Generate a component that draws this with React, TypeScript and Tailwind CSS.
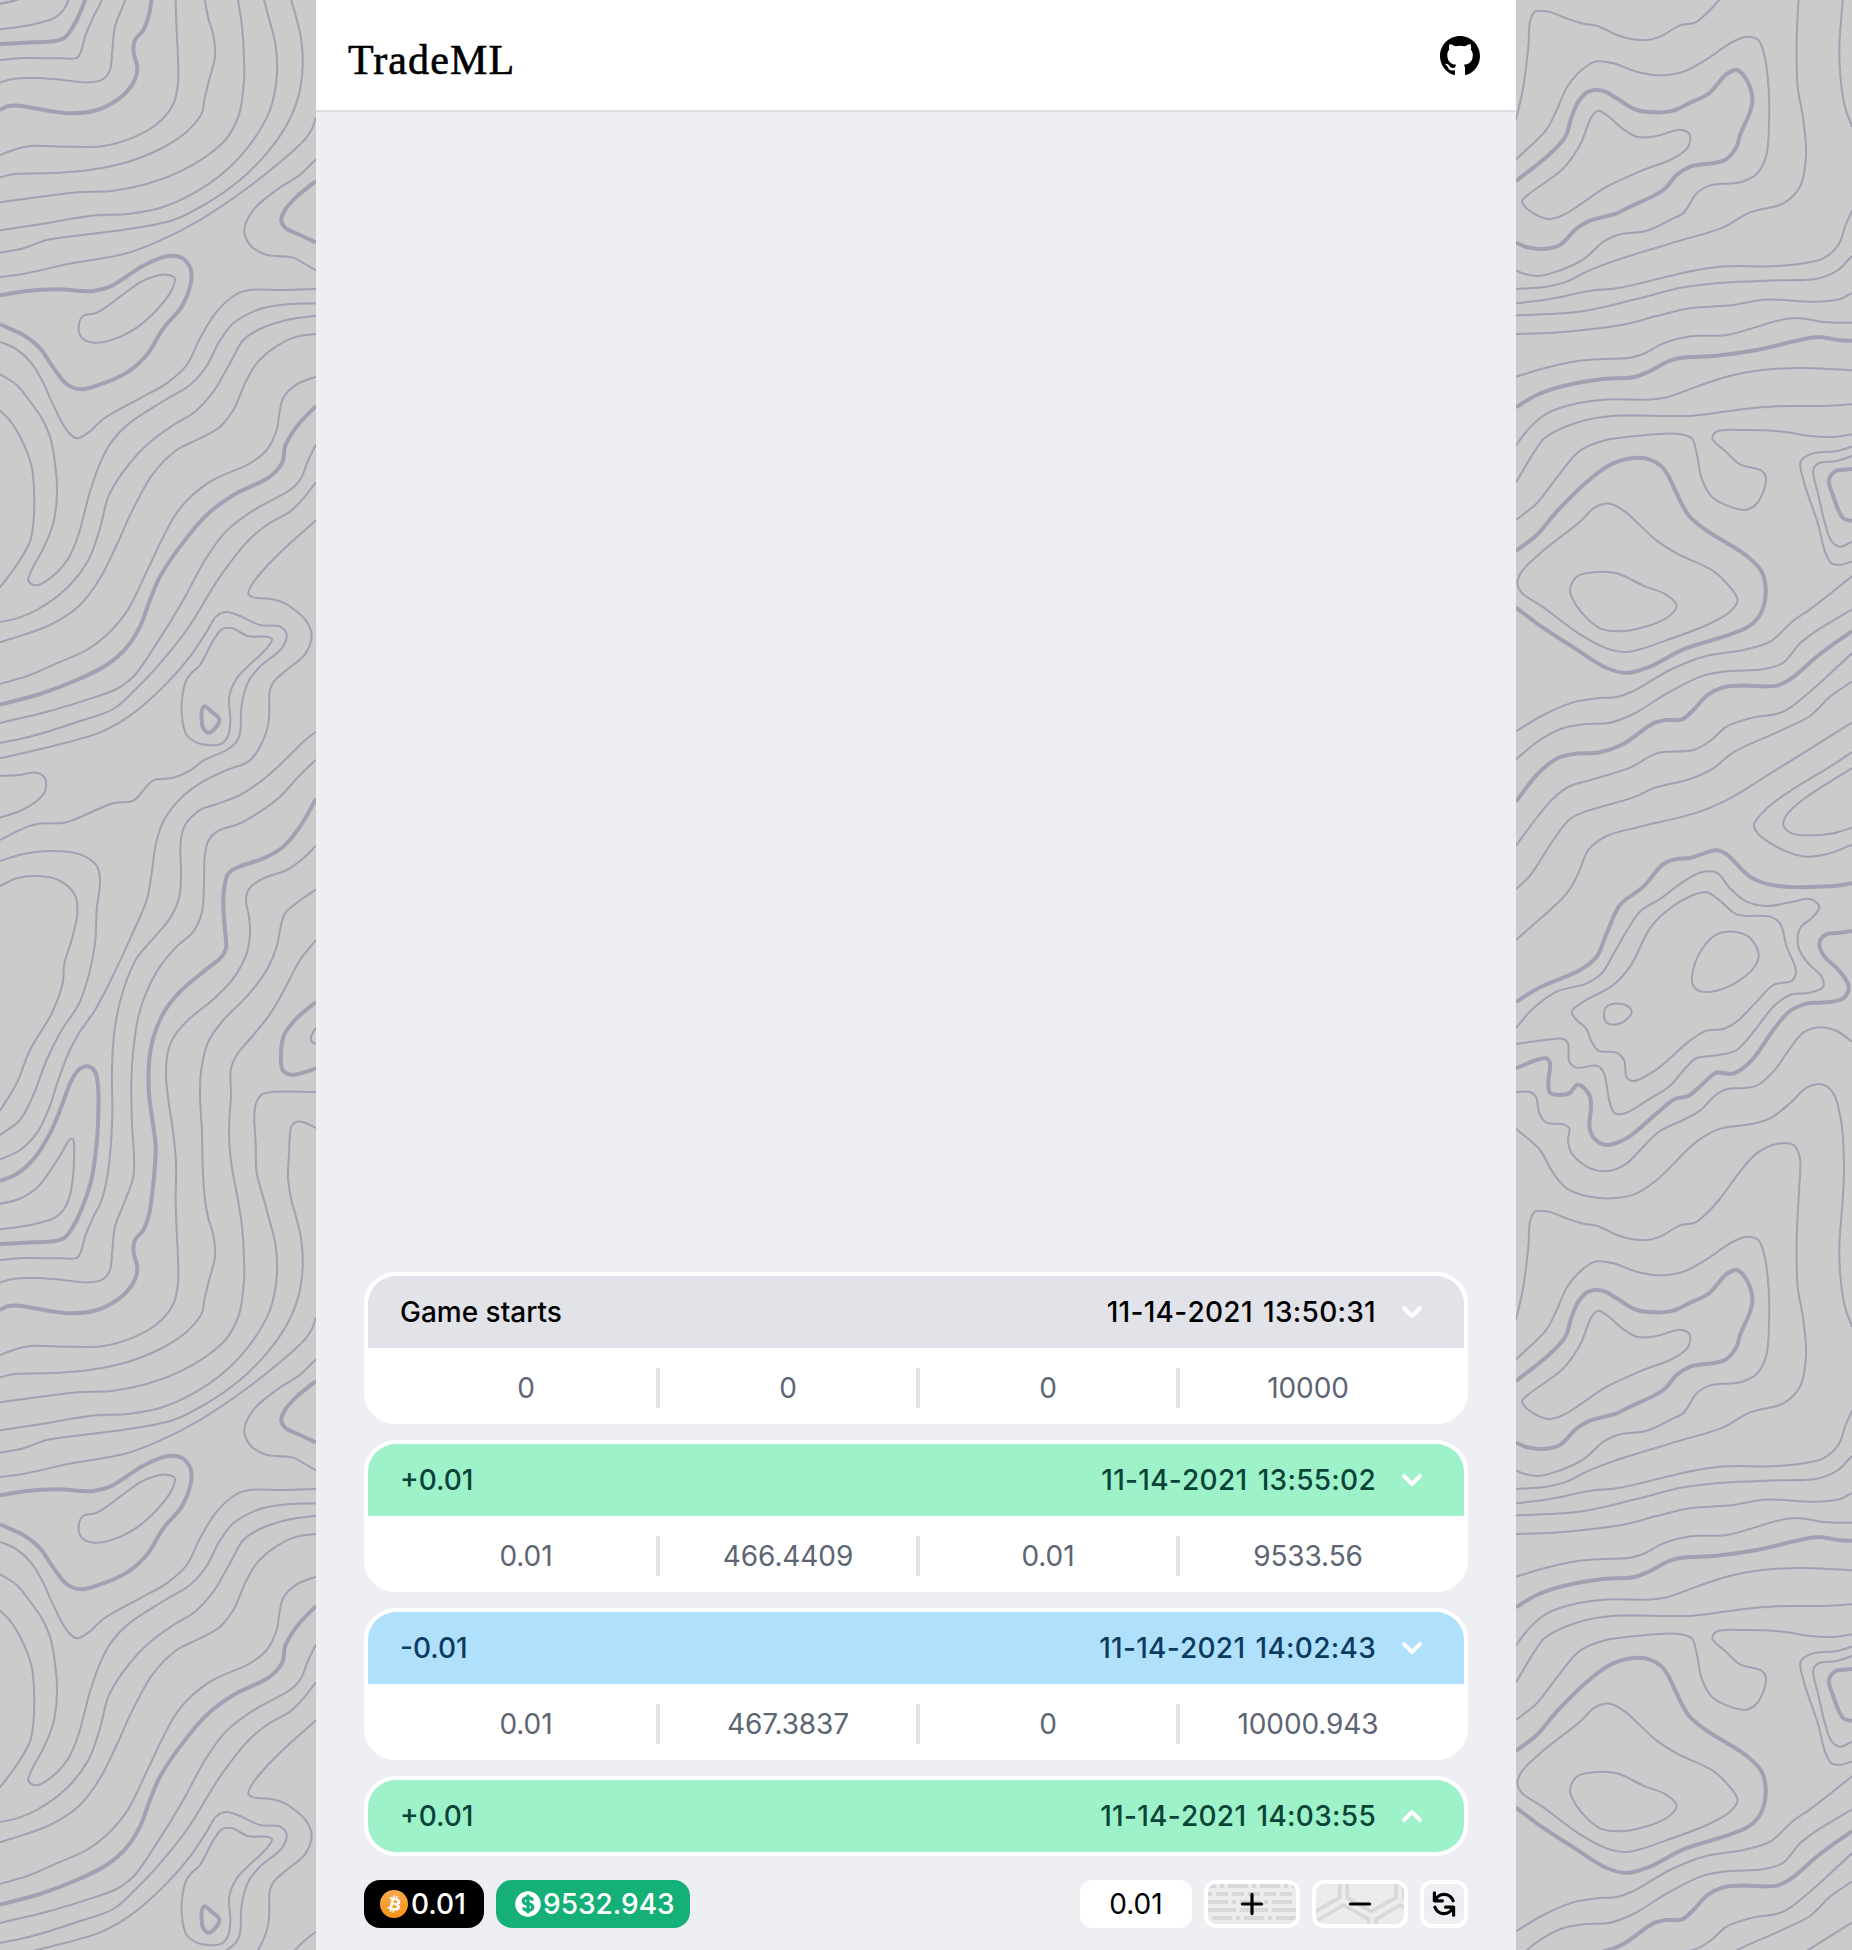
import React from "react";
import { BsGithub } from "react-icons/bs";

type Contour = { d: string; thick?: boolean; closed?: boolean };

// Contour lines as "x,y" control points, three units to a pixel.
const TILE = 3600;

const LEFT: Contour[] = [
  { d: "0,3611 55,3598 110,3564 150,3513 190,3450 208,3420 218,3416 222,3430 222,3480 218,3540 210,3585 203,3606 190,3630 165,3653 120,3668 60,3680 0,3688" },
  { d: "0,11 30,5 60,-3" },
  { thick: true, d: "0,3543 50,3522 100,3478 150,3400 185,3318 215,3240 240,3206 265,3199 285,3215 294,3260 294,3370 288,3450 275,3535 253,3606 225,3670 195,3712 160,3724 100,3727 0,3732" },
  { d: "0,3479 60,3450 110,3400 145,3330 175,3240 205,3160 235,3103 285,3030 330,2945 400,2795 440,2700 455,2620 468,2530 492,2460 542,2395 600,2350 680,2310 745,2285 780,2240 805,2170 808,2110 808,2080 820,2047 860,2010 915,1963 935,1905 915,1858 850,1808 810,1797 760,1792 745,1782 755,1755 790,1710 870,1630 948,1561" },
  { d: "0,3780 70,3774 180,3775 232,3773 243,3755 255,3710 278,3655 305,3600 322,3530 333,3430 337,3340 336,3200 345,3080 370,2970 410,2875 460,2815 510,2755 538,2690 543,2620 541,2545 544,2510 555,2475 575,2450 605,2427 650,2412 720,2385 800,2330 870,2265 915,2221 948,2195" },
  { d: "0,3847 40,3837 110,3834 180,3839 270,3847 310,3837 330,3810 337,3750 345,3680 376,3600 400,3530 402,3470 396,3370 394,3240 400,3150 415,3050 440,2975 480,2900 530,2840 580,2795 605,2740 612,2660 614,2570 625,2522 650,2495 720,2470 780,2435 840,2390 900,2325 948,2279" },
  { thick: true, d: "0,3930 25,3918 60,3917 120,3928 220,3940 300,3927 370,3885 405,3838 412,3805 400,3750 405,3720 430,3690 448,3640 454,3600 463,3520 467,3440 460,3380 447,3280 447,3190 458,3120 490,3040 540,2975 610,2915 665,2870 678,2845 676,2800 670,2720 673,2660 685,2620 710,2603 790,2575 850,2540 900,2480 948,2397" },
  { d: "0,4065 50,4047 90,4038 200,4040 310,4038 400,4012 470,3973 520,3912 534,3850 534,3780 530,3690 527,3600 528,3490 520,3400 505,3300 498,3220 505,3150 525,3105 570,3055 640,2998 700,2935 740,2860 750,2800 747,2750 738,2700 748,2665 790,2635 860,2610 910,2575 948,2537" },
  { d: "0,4132 45,4122 130,4120 250,4112 370,4090 480,4047 560,3995 605,3940 614,3895 630,3830 645,3770 640,3705 625,3655 615,3600 608,3500 606,3400 600,3280 605,3200 625,3125 670,3060 740,2990 800,2910 830,2840 842,2780 855,2740 885,2713 948,2668" },
  { d: "0,4207 100,4193 220,4178 340,4172 440,4152 540,4115 620,4068 680,4015 718,3940 732,3840 732,3770 726,3680 714,3600 697,3510 688,3430 688,3360 693,3290 693,3205 710,3165 760,3105 810,3042 855,2965 900,2880 948,2820" },
  { d: "0,4291 130,4271 270,4248 390,4241 480,4224 580,4180 680,4110 760,4020 810,3930 831,3820 826,3730 808,3660 792,3600 770,3518 767,3430 763,3350 768,3310 785,3284 815,3276 948,3276" },
  { d: "0,4358 70,4345 140,4320 230,4307 400,4285 520,4260 620,4210 720,4140 800,4060 860,3975 895,3890 908,3800 904,3720 888,3650 874,3600 864,3530 867,3460 870,3400 875,3377 890,3365 915,3368 948,3384" },
  { d: "0,831 70,822 200,793 380,760 480,722 600,660 730,573 830,495 915,418 935,388 948,353" },
  { d: "948,478 900,524 830,570 760,630 733,690 750,735 795,763 880,773 915,792 948,811" },
  { thick: true, d: "948,543 890,590 852,635 844,660 855,683 900,705 948,727" },
  { thick: true, d: "0,886 80,873 170,868 280,873 330,860 430,797 500,769 545,773 573,810 570,860 545,920 490,985 440,1065 380,1118 290,1157 240,1168 200,1152 160,1103 120,1045 70,1005 0,973" },
  { closed: true, d: "285,940 320,920 420,847 460,830 500,824 524,834 515,870 470,930 410,983 340,1018 280,1028 245,1013 236,980 250,947" },
  { d: "948,867 850,870 750,870 710,882 650,935 600,1015 560,1095 500,1150 420,1195 310,1257 265,1298 230,1315 200,1290 152,1198 130,1148 95,1090 50,1048 0,1025" },
  { d: "948,910 850,914 780,927 700,970 655,1030 620,1098 570,1155 490,1203 385,1272 335,1325 300,1390 270,1475 235,1605 205,1675 150,1735 105,1756 85,1742 95,1710 130,1645 160,1570 171,1480 165,1390 150,1310 127,1258 85,1197 50,1155 0,1122" },
  { d: "948,947 870,958 780,987 730,1020 690,1090 640,1175 585,1235 520,1275 440,1335 370,1415 325,1490 300,1585 265,1680 200,1765 110,1830 50,1855 0,1866" },
  { d: "0,1232 30,1262 70,1330 95,1400 102,1470 100,1570 90,1625 50,1695 0,1762" },
  { d: "948,1002 890,1010 820,1045 770,1090 735,1150 700,1230 660,1280 600,1315 530,1350 460,1420 400,1525 350,1635 300,1735 240,1815 150,1875 0,1927" },
  { d: "948,1130 890,1153 850,1193 838,1240 830,1290 800,1350 750,1390 630,1445 540,1525 490,1610 440,1715 380,1835 320,1905 260,1950 170,1990 90,2025 0,2052" },
  { thick: true, d: "948,1218 890,1280 855,1340 848,1385 810,1430 700,1485 620,1545 540,1640 480,1730 450,1800 420,1880 380,1942 320,1995 230,2040 120,2082 0,2114" },
  { d: "948,1333 925,1380 900,1440 870,1470 770,1525 680,1592 615,1680 550,1800 470,1930 400,2030 350,2067 270,2096 150,2133 0,2169" },
  { d: "948,1446 910,1495 870,1535 800,1575 740,1627 660,1730 560,1890 480,1990 410,2065 340,2127 250,2160 100,2207 0,2229" },
  { d: "0,2275 150,2240 300,2197 390,2147 500,2050 570,1970 620,1895 650,1848 680,1836 720,1848 780,1875 840,1880 860,1903 845,1945 780,2000 745,2045 725,2115 720,2200 710,2225 680,2250 610,2282 570,2312 520,2333 460,2341 435,2365 400,2402 340,2410 220,2460 190,2469 110,2472 60,2490 0,2520" },
  { d: "0,2328 50,2326 110,2318 135,2335 135,2375 110,2403 60,2433 0,2453" },
  { closed: true, d: "600,1995 635,1930 665,1888 695,1884 745,1909 800,1910 816,1918 800,1945 710,2035 688,2090 691,2160 685,2205 665,2231 600,2231 560,2205 546,2150 550,2070 565,2030" },
  { thick: true, closed: true, d: "606,2130 613,2119 635,2135 658,2158 645,2185 625,2198 610,2185 605,2160" },
  { d: "0,2583 70,2562 160,2553 240,2563 290,2597 300,2640 290,2730 285,2830 265,2930 235,3015 185,3090 140,3180 100,3285 60,3360 0,3405" },
  { d: "0,2658 50,2635 110,2628 175,2640 225,2685 232,2740 215,2820 193,2890 188,2950 155,3040 90,3150 50,3250 0,3332" },
  { thick: true, d: "948,3006 890,3055 852,3105 843,3160 848,3210 870,3224 910,3218 948,3205" },
  { d: "948,3082 933,3112 935,3125 948,3132" },
];

const RIGHT: Contour[] = [
  { d: "18,3960 40,3860 55,3740 61,3660 75,3635 110,3634 170,3655 220,3671 260,3677 330,3708 400,3721 450,3710 510,3676 555,3668 590,3640 627,3600 690,3515 740,3460 800,3432 850,3435 869,3470 868,3560 865,3610 860,3720 863,3860 880,3960 888,4070 870,4160 820,4210 720,4237 640,4282 500,4325 300,4387 230,4415 170,4445 110,4460 18,4467" },
  { d: "18,478 110,388 140,330 175,255 230,198 260,184 310,190 380,215 450,226 520,215 590,178 660,130 710,110 745,120 765,175 776,270 777,370 768,470 740,522 690,547 600,556 560,580 520,640 490,655 410,692 330,703 285,722 220,778 130,818 85,828 45,822 18,811" },
  { thick: true, d: "18,543 110,470 165,412 185,350 205,305 235,275 280,273 320,295 375,328 430,337 490,332 540,308 595,282 650,222 680,210 705,232 727,290 722,330 690,405 680,440 645,480 540,500 500,525 460,570 350,625 320,640 240,662 200,685 150,735 100,747 50,741 18,728" },
  { closed: true, d: "36,603 60,580 160,505 210,435 245,350 265,332 290,345 340,388 385,411 440,408 510,389 538,402 535,440 490,475 400,510 290,560 220,607 160,645 115,657 80,645 50,625" },
  { d: "1026,3980 1005,3920 992,3840 988,3740 998,3600 1002,3500 993,3360 970,3280 935,3253 890,3263 840,3310 780,3355 720,3373 630,3386 560,3425 440,3540 380,3580 320,3594 240,3590 170,3565 125,3512 90,3450 18,3386" },
  { d: "1026,632 1005,680 985,735 940,775 860,793 780,799 650,799 550,812 320,865 250,871 120,897 18,910" },
  { d: "1026,768 980,813 920,836 800,841 640,848 520,862 380,897 240,930 160,940 18,946" },
  { d: "1026,879 990,897 920,905 760,899 670,915 540,925 440,948 350,972 240,988 130,998 18,1002" },
  { d: "1026,968 950,967 860,954 800,963 650,1005 540,1009 460,1030 400,1062 360,1073 220,1081 120,1100 18,1130" },
  { thick: true, d: "1026,1022 990,1021 925,1011 870,1020 740,1050 620,1067 510,1074 480,1082 410,1118 370,1132 280,1137 160,1158 80,1185 18,1222" },
  { d: "1026,1111 870,1104 750,1111 650,1130 560,1160 470,1192 410,1199 300,1198 180,1215 110,1241 60,1282 18,1336" },
  { d: "1026,1213 930,1218 800,1219 680,1230 550,1247 310,1248 220,1262 130,1297 100,1318 75,1352 18,1447" },
  { d: "18,1560 80,1510 150,1420 210,1352 280,1322 380,1308 500,1301 545,1315 560,1360 575,1435 605,1490 660,1520 710,1529 745,1505 768,1435 755,1412 690,1393 650,1357 607,1315 620,1295 700,1290 820,1295 900,1308 970,1311 1026,1303" },
  { thick: true, d: "18,1653 80,1605 140,1535 220,1455 290,1400 350,1377 410,1376 460,1405 495,1470 535,1545 580,1585 710,1668 755,1715 767,1780 750,1845 715,1880 640,1910 520,1948 420,2000 350,2019 290,2004 190,1942 90,1877 18,1823" },
  { closed: true, d: "22,1750 35,1715 90,1660 210,1565 255,1522 300,1511 345,1535 440,1622 500,1660 610,1713 650,1750 683,1800 660,1835 590,1875 480,1917 390,1948 350,1956 290,1945 210,1903 100,1822 35,1778" },
  { closed: true, d: "180,1770 200,1730 250,1717 320,1720 400,1757 470,1785 500,1817 475,1850 400,1882 330,1894 270,1885 215,1838 187,1795" },
  { d: "1026,1340 985,1352 900,1363 872,1385 880,1440 925,1575 945,1655 965,1690 995,1694 1026,1684" },
  { d: "1026,1368 980,1383 925,1390 910,1410 925,1485 945,1570 965,1625 990,1640 1026,1625" },
  { thick: true, d: "1026,1407 975,1414 957,1440 970,1490 1000,1555 1026,1563" },
  { d: "18,2194 100,2145 180,2110 260,2095 320,2091 370,2073 480,2010 580,1970 700,1950 780,1925 850,1862 900,1828 1026,1729" },
  { d: "18,2278 90,2220 160,2184 220,2173 300,2168 370,2142 480,2075 580,2027 660,2013 760,2008 820,1988 870,1930 920,1892 1026,1828" },
  { thick: true, d: "18,2405 80,2325 140,2276 190,2262 270,2257 340,2232 430,2170 470,2160 515,2159 550,2130 595,2083 640,2062 690,2057 800,2057 840,2038 930,1962 1026,1893" },
  { d: "18,2537 75,2460 130,2395 180,2358 230,2343 360,2303 440,2260 550,2250 600,2223 650,2180 720,2155 820,2135 900,2075 1026,1960" },
  { d: "18,2667 60,2627 130,2520 180,2457 220,2437 370,2392 430,2365 540,2337 610,2305 670,2257 800,2197 900,2148 960,2090 1026,2045" },
  { d: "18,2820 170,2680 205,2620 235,2550 290,2508 390,2480 560,2438 660,2395 750,2340 1026,2168" },
  { d: "1026,2256 960,2300 850,2367 770,2425 732,2475 745,2502 830,2555 890,2570 950,2563 1026,2534" },
  { d: "1026,2304 880,2398 830,2445 820,2475 845,2500 910,2506 970,2500 1026,2483" },
  { thick: true, d: "18,3006 90,2962 210,2910 260,2870 290,2800 330,2715 400,2660 460,2592 500,2577 540,2574 620,2551 650,2563 720,2630 780,2654 960,2659 1026,2650" },
  { d: "18,3084 70,3025 140,2975 230,2950 275,2920 320,2845 390,2735 450,2697 520,2645 570,2618 620,2618 660,2665 710,2705 770,2718 850,2705 900,2697 928,2720 910,2750 870,2785 865,2840 890,2885 935,2930 940,2960 900,2978 840,2985 790,3020 735,3090 680,3150 620,3166 560,3174 530,3200 480,3257 410,3302 345,3340 315,3340 300,3310 280,3215 260,3197 200,3203 178,3185 174,3130 160,3117 100,3121 18,3132" },
  { closed: true, d: "185,3035 220,3005 310,2955 360,2900 420,2785 470,2733 550,2685 590,2677 625,2698 680,2743 780,2750 810,2770 830,2840 858,2915 845,2942 790,2955 740,3005 680,3065 640,3087 590,3092 540,3122 440,3208 370,3243 350,3232 342,3180 320,3158 265,3152 245,3125 228,3085 200,3060" },
  { closed: true, d: "547,2950 555,2890 585,2835 620,2803 670,2795 715,2810 745,2855 740,2890 690,2940 620,2972 565,2972" },
  { closed: true, d: "282,3045 287,3023 310,3011 350,3017 365,3035 345,3062 310,3074 287,3065" },
  { thick: true, d: "1026,2793 990,2798 945,2805 928,2830 940,2865 990,2915 1016,2960 1000,2995 950,3007 890,3011 840,3033 790,3090 730,3175 680,3217 660,3222 620,3218 580,3250 535,3288 495,3297 440,3340 350,3415 290,3435 255,3418 239,3385 243,3320 240,3290 215,3258 200,3255 180,3278 150,3285 120,3278 115,3250 120,3190 110,3175 80,3180 18,3205" },
  { d: "1026,3125 980,3093 930,3082 880,3098 840,3145 790,3215 740,3257 700,3264 650,3268 615,3287 570,3332 520,3360 450,3393 400,3440 350,3490 300,3512 240,3505 185,3460 174,3420 178,3385 160,3373 110,3368 88,3340 78,3290 60,3276 18,3276" },
];

// Centripetal Catmull-Rom spline written as cubic Bézier segments.
function smooth({ d, closed }: Contour): string {
  const pts = d.split(" ").map((p) => p.split(",").map(Number));
  const n = pts.length;
  const at = (i: number) => (closed ? pts[(i + n) % n] : pts[Math.max(0, Math.min(n - 1, i))]);
  const dist = (a: number[], b: number[]) => Math.sqrt(Math.hypot(a[0] - b[0], a[1] - b[1])) || 0.0001;
  let out = `M${pts[0][0]} ${pts[0][1]}`;
  const segments = closed ? n : n - 1;
  for (let i = 0; i < segments; i++) {
    const p0 = at(i - 1);
    const p1 = at(i);
    const p2 = at(i + 1);
    const p3 = at(i + 2);
    const a = dist(p0, p1);
    const b = dist(p1, p2);
    const c = dist(p2, p3);
    const c1 = [0, 1].map((k) =>
      a < 0.01 ? p1[k] + (p2[k] - p1[k]) / 3 : (a * a * p2[k] - b * b * p0[k] + (2 * a * a + 3 * a * b + b * b) * p1[k]) / (3 * a * (a + b))
    );
    const c2 = [0, 1].map((k) =>
      c < 0.01 ? p2[k] - (p2[k] - p1[k]) / 3 : (c * c * p1[k] - b * b * p3[k] + (2 * c * c + 3 * c * b + b * b) * p2[k]) / (3 * c * (c + b))
    );
    out += `C${c1[0].toFixed(1)} ${c1[1].toFixed(1)} ${c2[0].toFixed(1)} ${c2[1].toFixed(1)} ${p2[0]} ${p2[1]}`;
  }
  return closed ? out + "Z" : out;
}

function Topography({ id, lines, x, width }: { id: string; lines: Contour[]; x: number; width: number }) {
  return (
    <svg className="block h-[1950px] w-full" viewBox={`${x} 0 ${width} 5850`} fill="none" aria-hidden="true">
      <defs>
        <g id={id} stroke="#a69eb2">
          {lines.map((line, i) => (
            <path key={i} d={smooth(line)} strokeWidth={line.thick ? 12 : 6} />
          ))}
        </g>
      </defs>
      {[-TILE, 0, TILE].map((y) => (
        <use key={y} href={`#${id}`} y={y} />
      ))}
    </svg>
  );
}

function Solid({ d, className }: { d: string; className: string }) {
  return (
    <svg viewBox="0 0 20 20" className={className} fill="currentColor" aria-hidden="true">
      <path fillRule="evenodd" clipRule="evenodd" d={d} />
    </svg>
  );
}

const CHEVRON_DOWN = "M5.293 7.293a1 1 0 011.414 0L10 10.586l3.293-3.293a1 1 0 111.414 1.414l-4 4a1 1 0 01-1.414 0l-4-4a1 1 0 010-1.414z";
const CHEVRON_UP = "M14.707 12.707a1 1 0 01-1.414 0L10 9.414l-3.293 3.293a1 1 0 01-1.414-1.414l4-4a1 1 0 011.414 0l4 4a1 1 0 010 1.414z";
const PLUS = "M10 3a1 1 0 011 1v5h5a1 1 0 110 2h-5v5a1 1 0 11-2 0v-5H4a1 1 0 110-2h5V4a1 1 0 011-1z";
const MINUS = "M3 10a1 1 0 011-1h12a1 1 0 110 2H4a1 1 0 01-1-1z";
const REFRESH =
  "M4 2a1 1 0 011 1v2.101a7.002 7.002 0 0111.601 2.566 1 1 0 11-1.885.666A5.002 5.002 0 005.999 7H9a1 1 0 010 2H4a1 1 0 01-1-1V3a1 1 0 011-1zm.008 9.057a1 1 0 011.276.61A5.002 5.002 0 0014.001 13H11a1 1 0 110-2h5a1 1 0 011 1v5a1 1 0 11-2 0v-2.101a7.002 7.002 0 01-11.601-2.566 1 1 0 01.61-1.276z";
const DOLLAR =
  "M10 18a8 8 0 100-16 8 8 0 000 16zm1-13a1 1 0 10-2 0v.092a4.535 4.535 0 00-1.676.662C6.602 6.234 6 7.009 6 8c0 .99.602 1.765 1.324 2.246.48.32 1.054.545 1.676.662v1.941c-.391-.127-.68-.317-.843-.504a1 1 0 10-1.51 1.31c.562.649 1.413 1.076 2.353 1.253V15a1 1 0 102 0v-.092a4.535 4.535 0 001.676-.662C13.398 13.766 14 12.991 14 12c0-.99-.602-1.765-1.324-2.246A4.535 4.535 0 0011 9.092V7.151c.391.127.68.317.843.504a1 1 0 101.511-1.31c-.563-.649-1.413-1.076-2.354-1.253V5z";
const DOLLAR_BOWLS =
  "M8.433 7.418c.155-.103.346-.196.567-.267v1.698a2.305 2.305 0 01-.567-.267C8.07 8.34 8 8.114 8 8c0-.114.07-.34.433-.582zM11 12.849v-1.698c.22.071.412.164.567.267.364.243.433.468.433.582 0 .114-.07.34-.433.582a2.305 2.305 0 01-.567.267z";
const BITCOIN =
  "M23.189 14.02c.314-2.096-1.283-3.223-3.465-3.975l.708-2.84-1.728-.43-.69 2.765c-.454-.114-.92-.22-1.385-.326l.695-2.783L15.596 6l-.708 2.839c-.376-.086-.746-.17-1.104-.26l.002-.009-2.384-.595-.46 1.846s1.283.294 1.256.312c.7.175.826.638.805 1.006l-.806 3.235c.048.012.11.03.18.057l-.183-.045-1.13 4.532c-.086.212-.303.531-.793.41.018.025-1.256-.313-1.256-.313l-.858 1.978 2.25.561c.418.105.828.215 1.231.318l-.715 2.872 1.727.43.708-2.84c.472.127.93.245 1.378.357l-.706 2.828 1.728.43.715-2.866c2.948.558 5.164.333 6.097-2.333.752-2.146-.037-3.385-1.588-4.192 1.13-.26 1.98-1.003 2.207-2.538zm-3.95 5.538c-.533 2.147-4.148.986-5.32.695l.95-3.805c1.172.293 4.929.872 4.37 3.11zm.535-5.569c-.487 1.953-3.495.96-4.47.717l.86-3.45c.975.243 4.118.696 3.61 2.733z";

type Entry = { label: string; time: string; tone: string; values?: string[] };

const ENTRIES: Entry[] = [
  { label: "Game starts", time: "11-14-2021 13:50:31", tone: "bg-[#e2e3e8] text-black", values: ["0", "0", "0", "10000"] },
  { label: "+0.01", time: "11-14-2021 13:55:02", tone: "bg-[#9df2ca] text-[#0a4437]", values: ["0.01", "466.4409", "0.01", "9533.56"] },
  { label: "-0.01", time: "11-14-2021 14:02:43", tone: "bg-[#afe1fd] text-[#0d3b5e]", values: ["0.01", "467.3837", "0", "10000.943"] },
  { label: "+0.01", time: "11-14-2021 14:03:55", tone: "bg-[#9df2ca] text-[#0a4437]" },
];

function Card({ entry }: { entry: Entry }) {
  return (
    <section className="overflow-hidden rounded-[32px] border-4 border-white bg-white">
      <div className={`flex h-[72px] items-center px-8 text-[28px] font-medium ${entry.tone}`}>
        <span>{entry.label}</span>
        <span className="ml-auto tracking-[0.28px] [font-kerning:none] [word-spacing:2.5px]">{entry.time}</span>
        <Solid d={entry.values ? CHEVRON_DOWN : CHEVRON_UP} className="ml-4 size-10 text-white" />
      </div>
      {entry.values && (
        <div className="grid grid-cols-4 px-7 pt-5 pb-3 text-[28px] tracking-[-0.1px] text-[#5d6574]">
          {entry.values.map((value, i) => (
            <span
              key={i}
              className={`flex h-10 items-center justify-center ${i > 0 ? "border-l-4 border-[#e2e3e8]" : ""}`}
            >
              {value}
            </span>
          ))}
        </div>
      )}
    </section>
  );
}

function DashTexture() {
  return (
    <svg className="absolute inset-0 h-full w-full" aria-hidden="true">
      <defs>
        <pattern id="dashes" width="32" height="40" patternUnits="userSpaceOnUse">
          <path
            fill="#d7d7dc"
            d="M0 0h8v4h-8z M12 0h4v4h-4z M20 0h12v4h-12z M0 8h4v4h-4z M8 8h12v4h-12z M24 8h8v4h-8z M0 16h20v4h-20z M24 16h4v4h-4z M0 24h28v4h-28z M4 32h20v4h-20z M28 32h4v4h-4z"
          />
        </pattern>
      </defs>
      <rect width="100%" height="100%" fill="url(#dashes)" />
    </svg>
  );
}

function HexTexture() {
  return (
    <svg className="absolute inset-0 h-full w-full" viewBox="738 57 264 120" fill="none" stroke="#d7d7dc" strokeWidth="11" aria-hidden="true">
      <path d="M809 50V98L730 144M832 50V98L904 140L978 98V50M1001 50V98L1010 104M740 167L821 120L896 163V190M918 190V163L990 120L1010 131" />
    </svg>
  );
}

export default function App() {
  return (
    <div className="flex h-[1950px] w-[1852px] overflow-hidden bg-[#cbcbcb] font-['Inter',sans-serif]">
      <aside className="w-[316px] shrink-0">
        <Topography id="topo-left" lines={LEFT} x={0} width={948} />
      </aside>

      <main className="flex w-[1200px] shrink-0 flex-col bg-[#edeff3]">
        <header className="flex h-28 items-center justify-between border-b-2 border-[#dfe0e6] bg-white px-8">
          <h1 className="pt-[9px] font-['Liberation_Serif',serif] text-[42px] leading-none tracking-[1.1px] text-black [-webkit-text-stroke:0.6px_black]">
            TradeML
          </h1>
          <BsGithub className="mt-0.5 mr-1 size-10 text-black" />
        </header>

        <div className="flex grow flex-col justify-end gap-4 px-12 pb-6">
          {ENTRIES.map((entry) => (
            <Card key={entry.time} entry={entry} />
          ))}
        </div>

        <footer className="flex items-center gap-3 px-12 pb-[22px] text-[28px] text-black">
          <div className="flex h-12 w-[120px] items-center rounded-2xl bg-black pl-4 font-medium text-white">
            <svg viewBox="0 0 32 32" className="size-7 shrink-0" aria-hidden="true">
              <defs>
                <linearGradient id="coin" x1="0" y1="0" x2="0" y2="1">
                  <stop offset="0" stopColor="#f9aa4b" />
                  <stop offset="1" stopColor="#f7931a" />
                </linearGradient>
              </defs>
              <circle cx="16" cy="16" r="16" fill="url(#coin)" />
              <path fill="#fff" fillRule="evenodd" d={BITCOIN} />
            </svg>
            <span className="ml-[3px]">0.01</span>
          </div>
          <div className="flex h-12 w-[194px] items-center rounded-2xl bg-[#15b077] pl-4 font-medium text-white">
            <Solid d={DOLLAR + DOLLAR_BOWLS} className="size-8 shrink-0" />
            <span className="-ml-px">9532.943</span>
          </div>

          <div className="ml-auto flex h-12 w-28 items-center justify-center rounded-xl bg-white">0.01</div>
          <button className="relative flex h-12 w-24 items-center justify-center overflow-hidden rounded-xl border-4 border-white bg-[#ececec]">
            <DashTexture />
            <Solid d={PLUS} className="relative size-8" />
          </button>
          <button className="relative flex h-12 w-24 items-center justify-center overflow-hidden rounded-xl border-4 border-white bg-[#ececec]">
            <HexTexture />
            <Solid d={MINUS} className="relative size-8" />
          </button>
          <button className="flex size-12 items-center justify-center rounded-xl border-4 border-white">
            <Solid d={REFRESH} className="size-8 shrink-0" />
          </button>
        </footer>
      </main>

      <aside className="w-[336px] shrink-0">
        <Topography id="topo-right" lines={RIGHT} x={18} width={1008} />
      </aside>
    </div>
  );
}
